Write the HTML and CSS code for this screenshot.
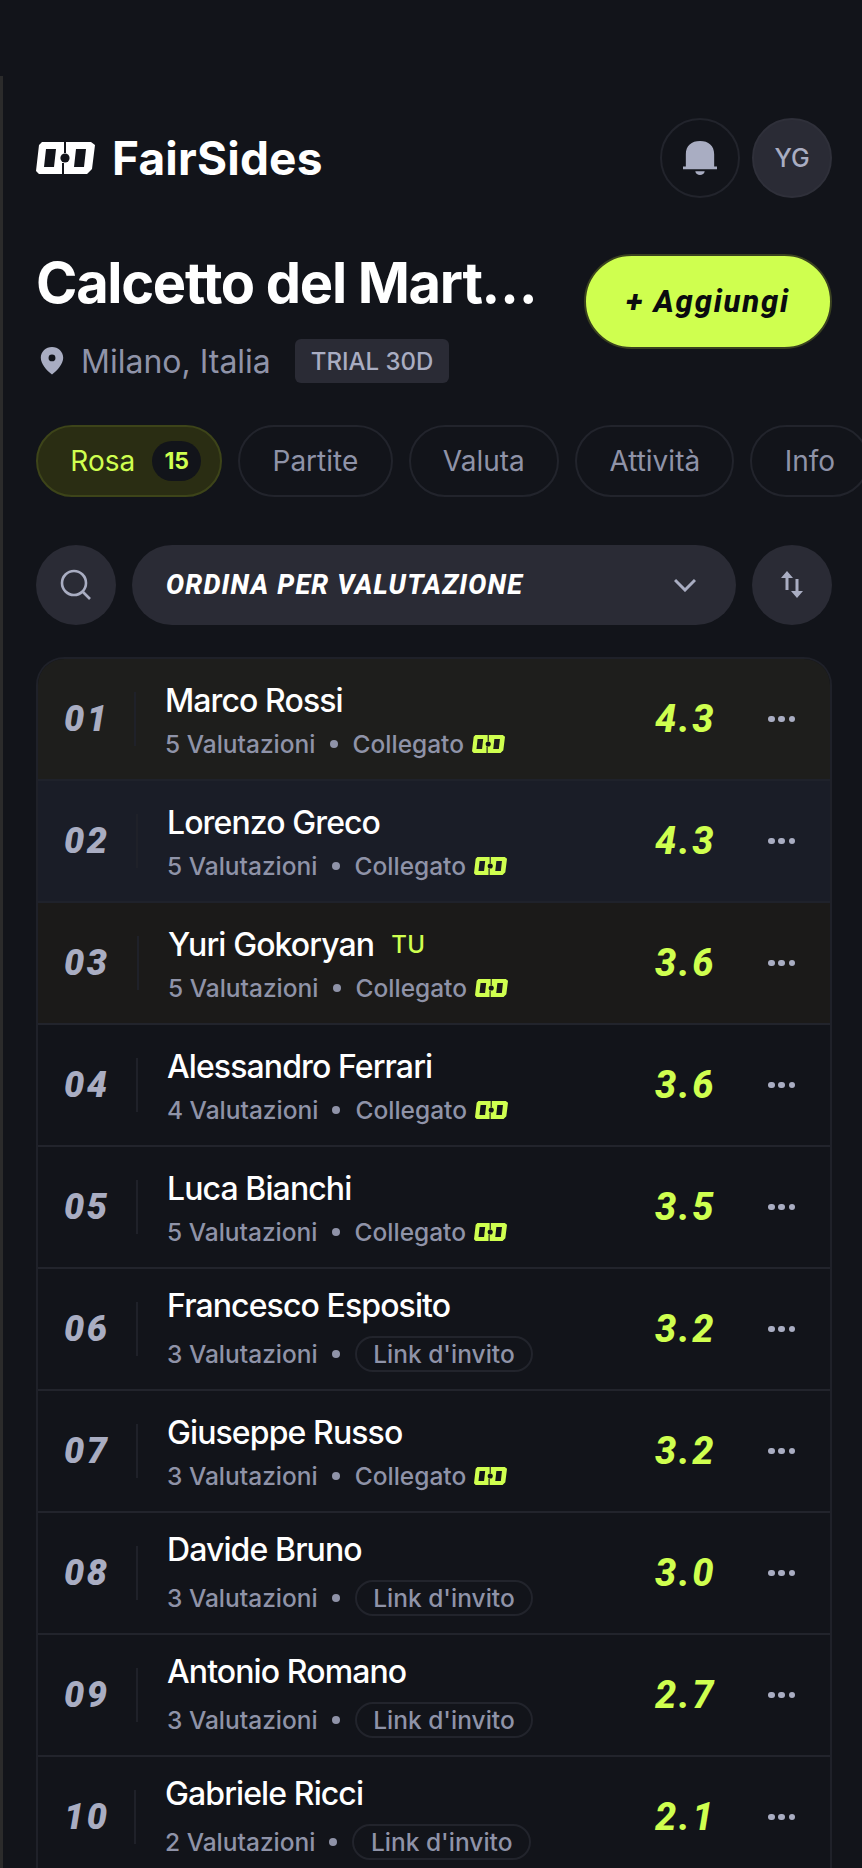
FILE: index.html
```html
<!DOCTYPE html>
<html lang="it">
<head>
<meta charset="utf-8">
<title>FairSides</title>
<link rel="stylesheet" href="styles.css">
</head>
<body>
<svg class="defs" width="0" height="0" aria-hidden="true">
  <symbol id="logo" viewBox="0 0 59 32">
    <path fill-rule="evenodd" fill="currentColor" d="M6 0H28V11H30V0H55L59 3 56 27 51 32H28V21H26V32H3L0 29 3 3ZM10 7 8 25H18L20 7ZM40 7 38 25H48L50 7Z"/>
    <circle cx="29" cy="16" r="4.6" fill="#12141a"/>
  </symbol>
</svg>
<main class="page">
  <header class="top">
    <div class="brand">
      <svg class="brand-logo"><use href="#logo"/></svg>
      <span class="brand-name">FairSides</span>
    </div>
    <div class="top-actions">
      <button class="circle circle-outline" aria-label="Notifiche">
        <svg width="34" height="36" viewBox="0 0 36 38"><path fill="#a9adc2" d="M3 28V15C3 6 9 1 18 1s15 5 15 14v13h3v3H0v-3h3ZM13 33h10c-.5 2.600-2.500 4-5 4s-4.500-1.400-5-4Z"/></svg>
      </button>
      <div class="circle circle-fill avatar">YG</div>
    </div>
  </header>

  <section class="group-head">
    <div class="group-info">
      <h1 class="group-title">Calcetto del Mart…</h1>
      <div class="group-meta">
        <svg class="pin" width="24" height="28" viewBox="0 0 24 30"><path fill="#a9adc2" fill-rule="evenodd" d="M12 0c6.600 0 12 5 12 11.500C24 18 18 25 12 29.500 6 25 0 18 0 11.500 0 5 5.400 0 12 0Zm0 8a3.700 3.700 0 1 0 0 7.400A3.700 3.700 0 0 0 12 8Z"/></svg>
        <span class="place">Milano, Italia</span>
        <span class="trial">TRIAL 30D</span>
      </div>
    </div>
    <button class="add">+ Aggiungi</button>
  </section>

  <nav class="tabs">
    <a class="tab tab-active">Rosa <span class="count">15</span></a>
    <a class="tab">Partite</a>
    <a class="tab">Valuta</a>
    <a class="tab">Attività</a>
    <a class="tab">Info</a>
  </nav>

  <div class="toolbar">
    <button class="circle circle-fill" aria-label="Cerca">
      <svg width="32" height="32" viewBox="0 0 32 32" fill="none" stroke="#a9adc2" stroke-width="2.600"><circle cx="14" cy="14" r="12"/><path d="M23 23l7 7"/></svg>
    </button>
    <button class="sort">
      <span>ORDINA PER VALUTAZIONE</span>
      <svg width="22" height="14" viewBox="0 0 22 14" fill="none" stroke="#a9adc2" stroke-width="3"><path d="M1 2l10 10L21 2"/></svg>
    </button>
    <button class="circle circle-fill" aria-label="Inverti">
      <svg width="22" height="28" viewBox="0 0 22 28"><path fill="#a9adc2" d="M6 0l6 7H7.500v12h-3V7H0ZM16 27l-6-7h4.500V8h3v12H22Z"/></svg>
    </button>
  </div>

  <section class="list">
    <article class="row row-gold">
      <span class="num num-narrow">01</span>
      <div class="player">
        <div class="name">Marco Rossi</div>
        <div class="meta"><span>5 Valutazioni</span><i class="dot"></i><span>Collegato</span><svg class="mini"><use href="#logo"/></svg></div>
      </div>
      <span class="rate">4.3</span>
      <span class="more"><i></i><i></i><i></i></span>
    </article>
    <article class="row row-silver">
      <span class="num">02</span>
      <div class="player">
        <div class="name">Lorenzo Greco</div>
        <div class="meta"><span>5 Valutazioni</span><i class="dot"></i><span>Collegato</span><svg class="mini"><use href="#logo"/></svg></div>
      </div>
      <span class="rate">4.3</span>
      <span class="more"><i></i><i></i><i></i></span>
    </article>
    <article class="row row-bronze">
      <span class="num num-wide">03</span>
      <div class="player">
        <div class="name"><span>Yuri Gokoryan</span><span class="you">TU</span></div>
        <div class="meta"><span>5 Valutazioni</span><i class="dot"></i><span>Collegato</span><svg class="mini"><use href="#logo"/></svg></div>
      </div>
      <span class="rate">3.6</span>
      <span class="more"><i></i><i></i><i></i></span>
    </article>
    <article class="row">
      <span class="num">04</span>
      <div class="player">
        <div class="name">Alessandro Ferrari</div>
        <div class="meta"><span>4 Valutazioni</span><i class="dot"></i><span>Collegato</span><svg class="mini"><use href="#logo"/></svg></div>
      </div>
      <span class="rate">3.6</span>
      <span class="more"><i></i><i></i><i></i></span>
    </article>
    <article class="row">
      <span class="num">05</span>
      <div class="player">
        <div class="name">Luca Bianchi</div>
        <div class="meta"><span>5 Valutazioni</span><i class="dot"></i><span>Collegato</span><svg class="mini"><use href="#logo"/></svg></div>
      </div>
      <span class="rate">3.5</span>
      <span class="more"><i></i><i></i><i></i></span>
    </article>
    <article class="row">
      <span class="num">06</span>
      <div class="player">
        <div class="name">Francesco Esposito</div>
        <div class="meta"><span>3 Valutazioni</span><i class="dot"></i><span class="pill">Link d'invito</span></div>
      </div>
      <span class="rate">3.2</span>
      <span class="more"><i></i><i></i><i></i></span>
    </article>
    <article class="row">
      <span class="num">07</span>
      <div class="player">
        <div class="name">Giuseppe Russo</div>
        <div class="meta"><span>3 Valutazioni</span><i class="dot"></i><span>Collegato</span><svg class="mini"><use href="#logo"/></svg></div>
      </div>
      <span class="rate">3.2</span>
      <span class="more"><i></i><i></i><i></i></span>
    </article>
    <article class="row">
      <span class="num">08</span>
      <div class="player">
        <div class="name">Davide Bruno</div>
        <div class="meta"><span>3 Valutazioni</span><i class="dot"></i><span class="pill">Link d'invito</span></div>
      </div>
      <span class="rate">3.0</span>
      <span class="more"><i></i><i></i><i></i></span>
    </article>
    <article class="row">
      <span class="num">09</span>
      <div class="player">
        <div class="name">Antonio Romano</div>
        <div class="meta"><span>3 Valutazioni</span><i class="dot"></i><span class="pill">Link d'invito</span></div>
      </div>
      <span class="rate">2.7</span>
      <span class="more"><i></i><i></i><i></i></span>
    </article>
    <article class="row">
      <span class="num num-narrow">10</span>
      <div class="player">
        <div class="name">Gabriele Ricci</div>
        <div class="meta"><span>2 Valutazioni</span><i class="dot"></i><span class="pill">Link d'invito</span></div>
      </div>
      <span class="rate">2.1</span>
      <span class="more"><i></i><i></i><i></i></span>
    </article>
  </section>
</main>
</body>
</html>
```

FILE: styles.css
```css
* { box-sizing: border-box; }
html, body { margin: 0; height: 1868px; overflow: hidden; background: #12141a; }
body { font-family: Inter, "Liberation Sans", sans-serif; color: #fff; }
button { font: inherit; color: inherit; background: none; border: 0; padding: 0; }
.defs { position: absolute; }
.page {
  height: 1792px;
  margin-top: 76px;
  padding: 42px 30px 0 33px;
  border-left: 3px solid #2b2b2b;
  overflow: hidden;
}
.top { display: flex; align-items: center; justify-content: space-between; height: 80px; }
.brand { display: flex; align-items: center; gap: 17px; }
.brand-logo { width: 59px; height: 32px; color: #fff; }
.brand-name { font-size: 46px; font-weight: 700; letter-spacing: .2px; line-height: 1; }
.top-actions { display: flex; gap: 12px; }
.circle { width: 80px; height: 80px; border-radius: 50%; display: flex; align-items: center; justify-content: center; flex: none; }
.circle-outline { border: 2px solid #22242c; }
.circle-fill { background: #2a2b35; }
.avatar { font-size: 25px; font-weight: 500; color: #a9adc2; border: 2px solid #2f303a; }

.group-head { display: flex; align-items: flex-start; gap: 40px; margin-top: 52px; }
.group-info { flex: 1; min-width: 0; }
.group-title { margin: 0; font-size: 56px; line-height: 66px; font-weight: 700; letter-spacing: -1.300px; white-space: nowrap; }
.group-meta { display: flex; align-items: center; margin-top: 23px; }
.pin { margin-left: 4px; flex: none; }
.place { font-size: 32px; color: #8f93a8; margin-left: 17px; }
.trial { margin-left: 24px; height: 44px; padding: 0 16px; display: flex; align-items: center; border-radius: 6px; background: #2a2b35; color: #a9adc2; font-size: 24px; font-weight: 500; }
.add {
  flex: none; width: 248px; height: 95px; margin-top: 4px; border-radius: 48px;
  background: #cfff4f; border: 2px solid #3a4220; color: #0b0c0f;
  font-family: Roboto, sans-serif; font-style: italic; font-weight: 800; font-size: 31px; letter-spacing: 1.800px;
}

.tabs { display: flex; gap: 16px; margin-top: 42px; width: 900px; }
.tab {
  display: flex; align-items: center; height: 72px; padding: 0 32.300px; border-radius: 36px;
  border: 2px solid #22242c; font-size: 28px; color: #8f93a8; flex: none;
}
.tab-active { background: #2a2d13; border-color: #3d4419; color: #cfff4f; gap: 17px; padding-right: 19px; }
.count { width: 49px; height: 40px; border-radius: 20px; background: #12141a; display: flex; align-items: center; justify-content: center; font-size: 23px; font-weight: 700; }

.toolbar { display: flex; gap: 16px; margin-top: 48px; }
.sort {
  flex: 1; height: 80px; border-radius: 40px; background: #2a2b35; padding: 0 40px 0 34px;
  display: flex; align-items: center; justify-content: space-between;
  font-family: Roboto, sans-serif; font-style: italic; font-weight: 800; font-size: 27px; letter-spacing: 1.200px;
}

.list { margin-top: 32px; border: 2px solid #1f2129; border-bottom: 0; border-radius: 28px 28px 0 0; overflow: hidden; }
.row { height: 122px; display: flex; align-items: center; padding: 0 35px 0 26px; border-bottom: 2px solid #22242c; background: #12141a; }
.row-gold { background: #1e1e1c; border-bottom-color: #1f222b; }
.row-silver { background: #1a1d27; border-bottom-color: #1f222b; }
.row-bronze { background: #1b1a19; }
.num {
  width: 74px; height: 54px; border-right: 2px solid #1f2129; flex: none;
  display: flex; align-items: center;
  font-family: Roboto, sans-serif; font-style: italic; font-weight: 900; font-size: 36px; letter-spacing: 2.500px; color: #a9adc2;
}
.num-narrow { width: 72px; }
.num-wide { width: 75px; }
.player { flex: 1; min-width: 0; padding-left: 29px; }
.name { display: flex; align-items: center; font-size: 32px; font-weight: 500; letter-spacing: -.9px; line-height: 40px; }
.you { margin-left: 17px; font-size: 24px; font-weight: 500; color: #cfff4f; letter-spacing: .5px; }
.meta { display: flex; align-items: center; margin-top: 10px; font-size: 24.500px; line-height: 26px; font-weight: 500; color: #8f93a8; }
.dot { width: 8px; height: 8px; border-radius: 50%; background: #8f93a8; margin: 0 15px 0 14px; flex: none; }
.pill { height: 36px; padding: 0 16.500px; border: 2px solid #22242c; border-radius: 18px; display: flex; align-items: center; }
.mini { width: 33px; height: 18px; color: #cfff4f; margin-left: 8px; }
.rate { width: 66px; font-family: Roboto, sans-serif; font-style: italic; font-weight: 800; font-size: 38px; letter-spacing: 2.500px; color: #cfff4f; flex: none; text-align: right; }
.more { display: flex; justify-content: space-between; margin-left: 52px; flex: none; width: 27px; }
.more i { width: 6.500px; height: 6.500px; border-radius: 50%; background: #a9adc2; flex: none; }
```
